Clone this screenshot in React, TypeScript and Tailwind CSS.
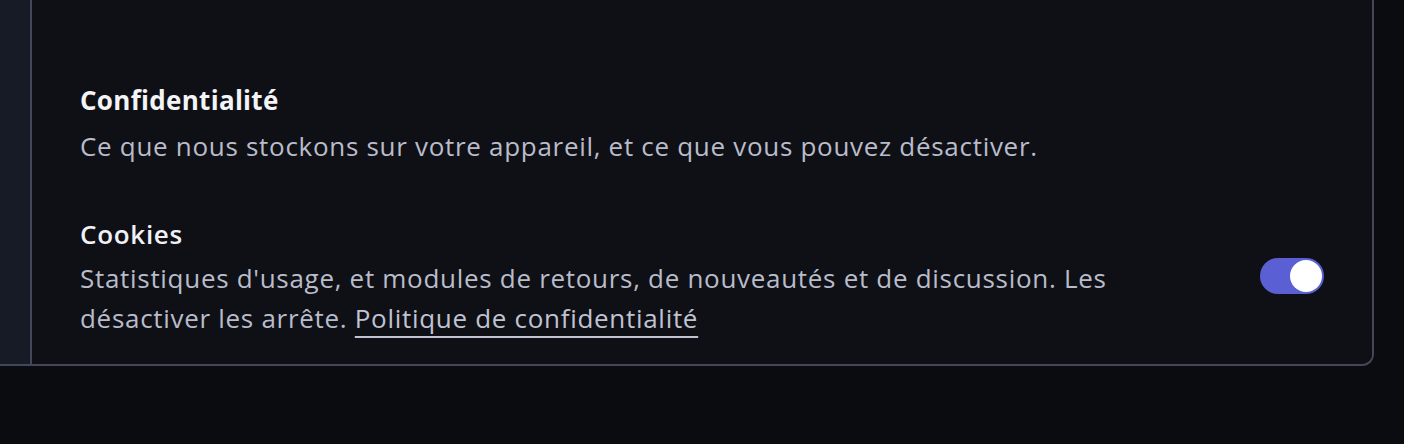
export default function App() {
  return (
    <div className="min-h-[444px] w-full bg-[#0b0c0f] font-['Open_Sans',sans-serif] tracking-[0.7px]">
      <div className="flex w-[1374px] rounded-br-[12px] border-b-2 border-r-2 border-[#44475a]">
        {/* sidebar edge */}
        <div className="w-[30px] shrink-0 bg-[#171b25]" />

        <section className="flex-1 rounded-br-[10px] border-l-2 border-[#44475a] bg-[#0f1015] px-[48px] pb-[26px] pt-[80px]">
          <h2 className="text-[26px] font-bold leading-[40px] tracking-[0.3px] text-[#f3f4f7]">Confidentialité</h2>
          <p className="mt-[6px] text-[26px] leading-[40px] text-[#b9bccb]">
            Ce que nous stockons sur votre appareil, et ce que vous pouvez désactiver.
          </p>

          <div className="mt-[48px] flex items-center justify-between gap-8">
            <div className="max-w-[1060px]">
              <h3 className="text-[26px] font-semibold leading-[40px] text-[#f0f1f5]">Cookies</h3>
              <p className="mt-[4px] text-[26px] leading-[40px] text-[#b9bccb]">
                Statistiques d'usage, et modules de retours, de nouveautés et de discussion. Les désactiver les
                arrête.{' '}
                <a
                  href="#"
                  className="text-[#c0c3d2] underline decoration-[#c0c3d2] decoration-2 underline-offset-[8px]"
                >
                  Politique de confidentialité
                </a>
              </p>
            </div>

            <button
              type="button"
              role="switch"
              aria-checked="true"
              className="flex h-[36px] w-[64px] shrink-0 items-center justify-end rounded-full bg-[#5a5fd4] px-[2px]"
            >
              <span className="h-[32px] w-[32px] rounded-full bg-white" />
            </button>
          </div>
        </section>
      </div>
    </div>
  );
}
